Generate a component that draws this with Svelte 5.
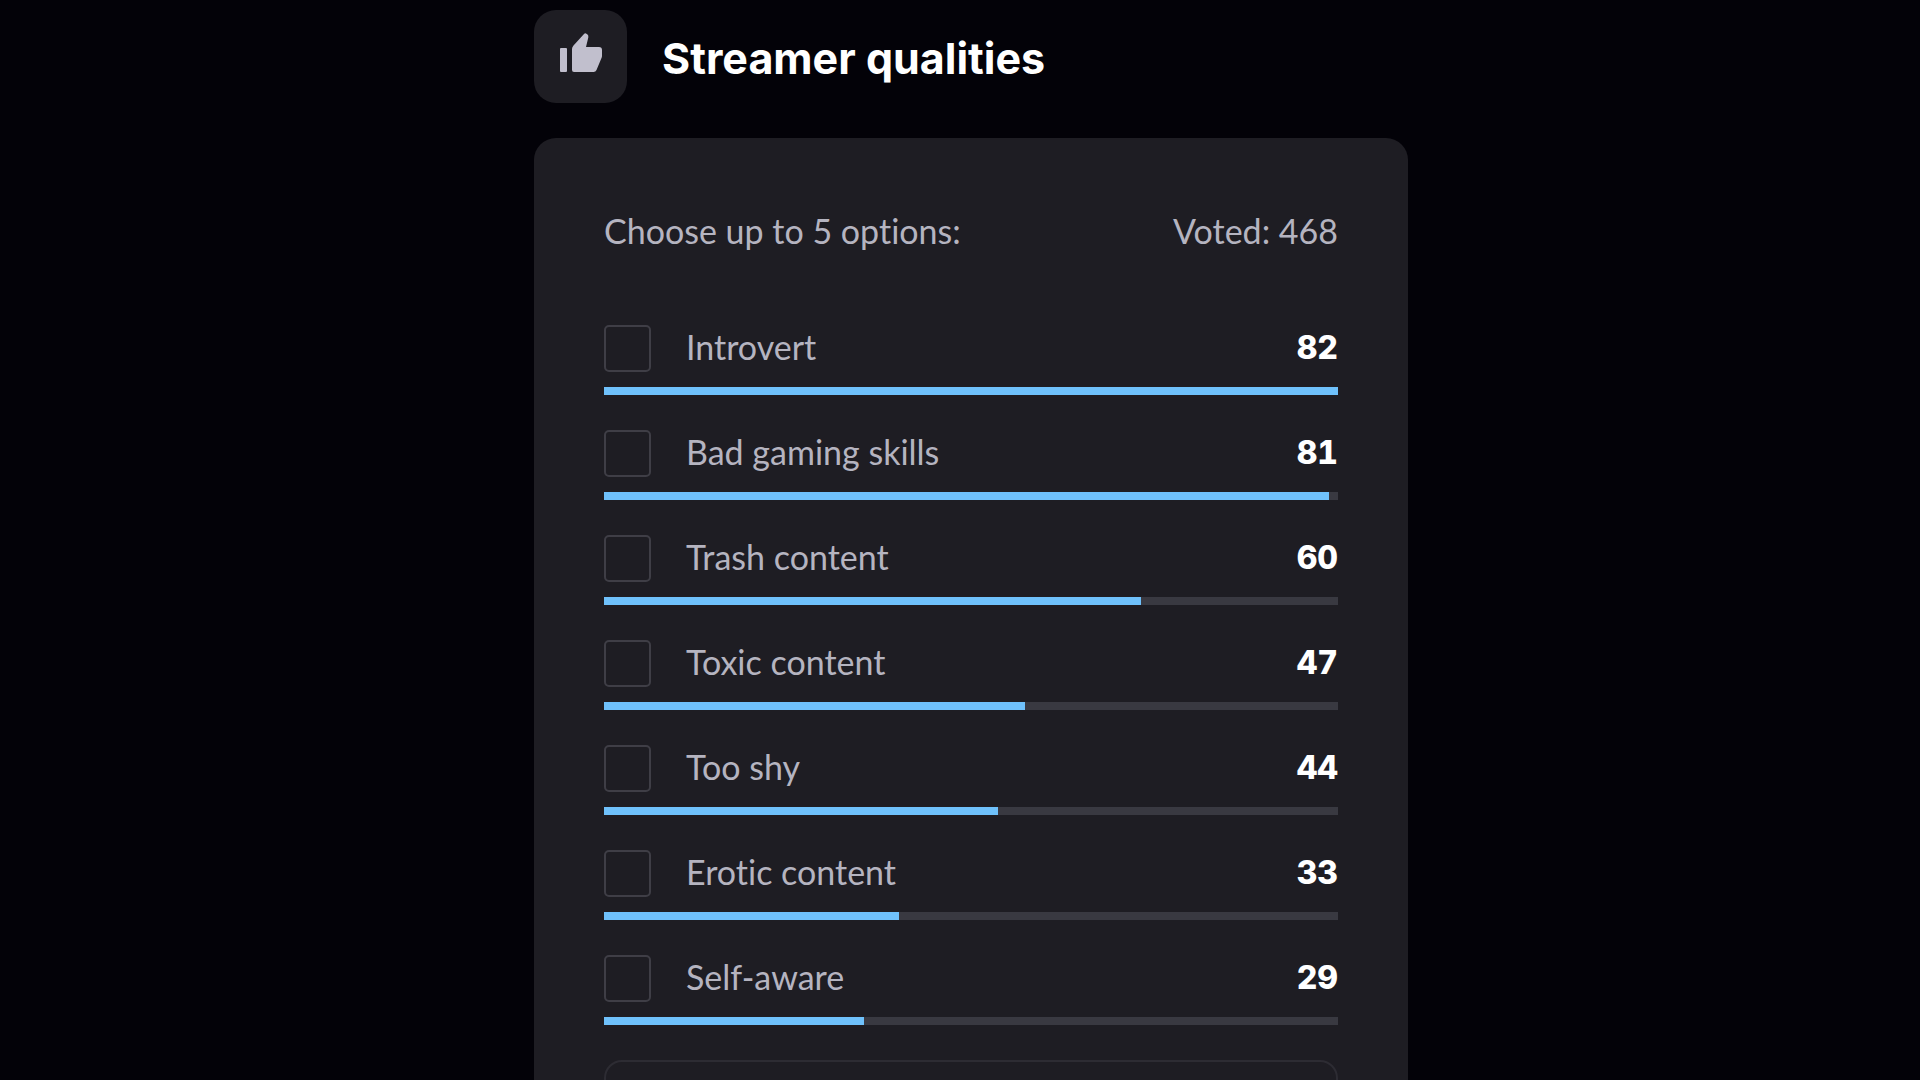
<script>
  const voted = 468;
  const maxOptions = 5;

  let selected = [];
  let suggestion = "";

  const qualities = [
    { id: "introvert", title: "Introvert", votes: 82 },
    { id: "bad-gaming", title: "Bad gaming skills", votes: 81 },
    { id: "trash", title: "Trash content", votes: 60 },
    { id: "toxic", title: "Toxic content", votes: 47 },
    { id: "shy", title: "Too shy", votes: 44 },
    { id: "erotic", title: "Erotic content", votes: 33 },
    { id: "self-aware", title: "Self-aware", votes: 29 },
  ];

  const top = Math.max(...qualities.map((q) => q.votes));

  $: full = selected.length >= maxOptions;
</script>

<main>
  <header>
    <div class="badge">
      <svg viewBox="0 0 44 40" aria-hidden="true">
        <path
          d="M2 15h5q1 0 1 1v22q0 1-1 1H2q-1 0-1-1V16q0-1 1-1zM13 37V16q0-2 1.500-3.500L25 1q1-1 2-.5l1.500 1q1.200 1 .8 3L27 14h13q3 0 3 3v6q0 1-.5 2l-5 12q-.8 2-3 2H15q-2 0-2-2z"
        />
      </svg>
    </div>
    <h1>Streamer qualities</h1>
  </header>

  <section class="panel">
    <div class="summary">
      <span>Choose up to {maxOptions} options:</span>
      <span>Voted: {voted}</span>
    </div>

    <ul>
      {#each qualities as { id, title, votes } (id)}
        <li>
          <div class="option">
            <input
              type="checkbox"
              {id}
              value={id}
              bind:group={selected}
              disabled={full && !selected.includes(id)}
            />
            <label for={id}>{title}</label>
            <span class="votes">{votes}</span>
          </div>
          <div class="track">
            <div class="fill" style={`width: ${(votes / top) * 100}%`}></div>
          </div>
        </li>
      {/each}
    </ul>

    <input
      class="suggest"
      type="text"
      aria-label="Your option"
      bind:value={suggestion}
    />
  </section>
</main>

<style>
  :global(body) {
    background: #030208;
    overflow: hidden;
  }

  :global(#app) {
    height: 100vh;
    overflow: hidden;
  }

  main {
    box-sizing: border-box;
    max-width: 896px;
    margin: 0 auto;
    padding: 10px 0 0 22px;
    font-family: Lato, "Open Sans", sans-serif;
    font-size: 34px;
    font-variant-ligatures: none;
    line-height: 40px;
    color: #b5b4c0;
  }

  header {
    display: flex;
    align-items: center;
    gap: 35px;
    margin-bottom: 35px;
  }

  .badge {
    display: flex;
    align-items: center;
    justify-content: center;
    box-sizing: border-box;
    width: 93px;
    height: 93px;
    padding-bottom: 8px;
    border-radius: 22px;
    background: #1e1d23;
  }

  .badge svg {
    width: 44px;
    height: 40px;
    fill: #c1bfcd;
  }

  h1 {
    margin: 0;
    padding-top: 2px;
    font-family: Inter, sans-serif;
    font-size: 43px;
    line-height: 52px;
    font-weight: 700;
    color: #fff;
  }

  .panel {
    padding: 70px;
    border-radius: 22px;
    background: #1e1d23;
  }

  .summary {
    display: flex;
    justify-content: space-between;
    margin: 3px 0 74px;
  }

  ul {
    display: flex;
    flex-direction: column;
    gap: 35px;
    margin: 0 0 35px;
    padding: 0;
    list-style: none;
  }

  .option {
    display: flex;
    align-items: center;
    gap: 35px;
    margin-bottom: 15px;
  }

  input[type="checkbox"] {
    appearance: none;
    flex: none;
    box-sizing: border-box;
    width: 47px;
    height: 47px;
    margin: 0;
    border: 2px solid #3f3e46;
    border-radius: 5px;
    cursor: pointer;
  }

  input[type="checkbox"]:checked {
    border-color: #6fc1fb;
    background: #6fc1fb;
  }

  label {
    flex: 1;
    padding-bottom: 3px;
    cursor: pointer;
  }

  .votes {
    padding-bottom: 2px;
    font-family: Inter, sans-serif;
    font-size: 32px;
    font-weight: 800;
    font-variant-numeric: tabular-nums;
    color: #fff;
  }

  .track {
    height: 8px;
    background: #393941;
  }

  .fill {
    height: 100%;
    background: #6fc1fb;
  }

  .suggest {
    display: block;
    box-sizing: border-box;
    width: 100%;
    height: 94px;
    padding: 0 35px;
    border: 2px solid #2d2c33;
    border-radius: 18px;
    background: transparent;
    color: inherit;
    font: inherit;
  }
</style>
